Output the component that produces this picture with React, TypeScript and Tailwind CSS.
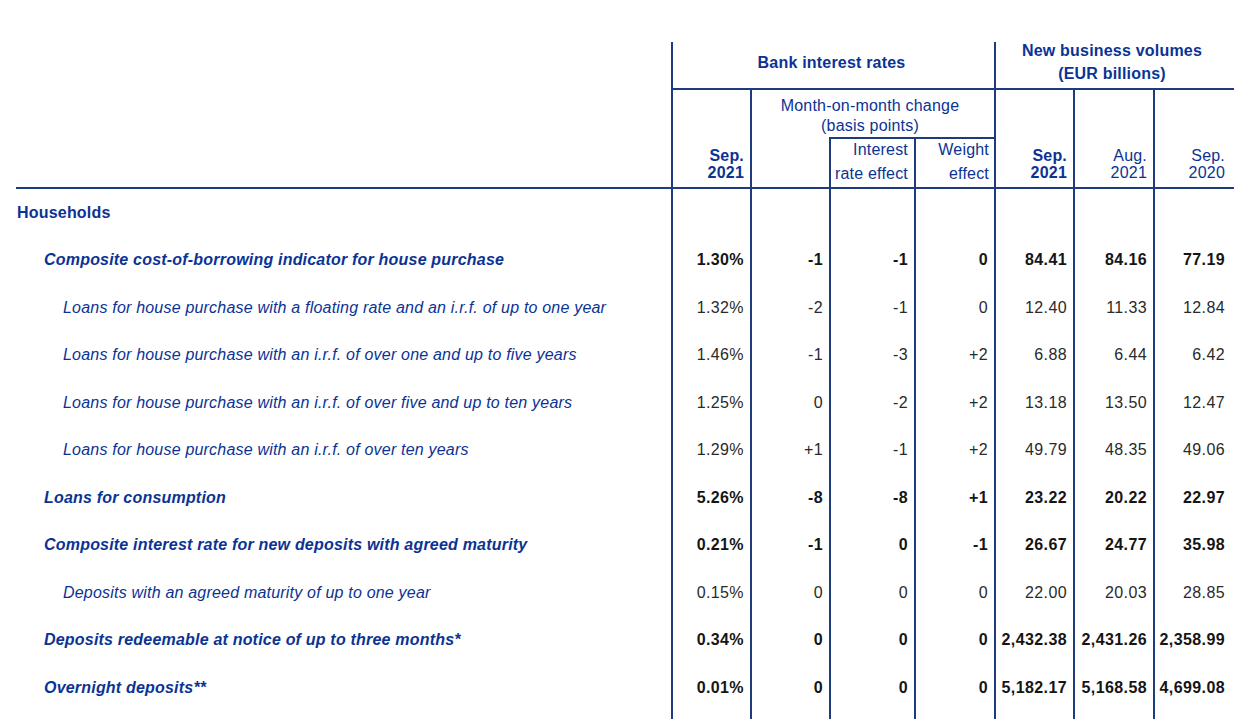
const COLS = 'grid-cols-[655px_79px_79px_85px_80px_79px_80px_81px]';

type Row = {
  label: string;
  level: 0 | 1 | 2;
  values?: string[];
};

const rows: Row[] = [
  { label: 'Households', level: 0 },
  {
    label: 'Composite cost-of-borrowing indicator for house purchase',
    level: 1,
    values: ['1.30%', '-1', '-1', '0', '84.41', '84.16', '77.19'],
  },
  {
    label: 'Loans for house purchase with a floating rate and an i.r.f. of up to one year',
    level: 2,
    values: ['1.32%', '-2', '-1', '0', '12.40', '11.33', '12.84'],
  },
  {
    label: 'Loans for house purchase with an i.r.f. of over one and up to five years',
    level: 2,
    values: ['1.46%', '-1', '-3', '+2', '6.88', '6.44', '6.42'],
  },
  {
    label: 'Loans for house purchase with an i.r.f. of over five and up to ten years',
    level: 2,
    values: ['1.25%', '0', '-2', '+2', '13.18', '13.50', '12.47'],
  },
  {
    label: 'Loans for house purchase with an i.r.f. of over ten years',
    level: 2,
    values: ['1.29%', '+1', '-1', '+2', '49.79', '48.35', '49.06'],
  },
  {
    label: 'Loans for consumption',
    level: 1,
    values: ['5.26%', '-8', '-8', '+1', '23.22', '20.22', '22.97'],
  },
  {
    label: 'Composite interest rate for new deposits with agreed maturity',
    level: 1,
    values: ['0.21%', '-1', '0', '-1', '26.67', '24.77', '35.98'],
  },
  {
    label: 'Deposits with an agreed maturity of up to one year',
    level: 2,
    values: ['0.15%', '0', '0', '0', '22.00', '20.03', '28.85'],
  },
  {
    label: 'Deposits redeemable at notice of up to three months*',
    level: 1,
    values: ['0.34%', '0', '0', '0', '2,432.38', '2,431.26', '2,358.99'],
  },
  {
    label: 'Overnight deposits**',
    level: 1,
    values: ['0.01%', '0', '0', '0', '5,182.17', '5,168.58', '4,699.08'],
  },
];

function BodyRow({ row }: { row: Row }) {
  const bold = row.level < 2;
  const labelClass =
    row.level === 0
      ? 'pl-[1px] font-bold'
      : row.level === 1
        ? 'pl-[28px] font-bold italic'
        : 'pl-[47px] italic';
  const cells = row.values ?? ['', '', '', '', '', '', ''];

  return (
    <div className={`grid ${COLS} h-[47.5px]`}>
      <div className={`flex items-center text-[#0b3394] ${labelClass}`}>{row.label}</div>
      {cells.map((v, i) => (
        <div
          key={i}
          className={`flex items-center justify-end border-l-2 border-[#1e3c7c] tracking-[0.4px] ${
            i === 6 ? 'pr-[9px]' : 'pr-[6px]'
          } ${bold ? 'font-bold text-[#151515]' : 'text-[#2a2a2a]'}`}
        >
          {v}
        </div>
      ))}
    </div>
  );
}

function Header() {
  return (
    <div className={`grid ${COLS} grid-rows-[48px_47px_50px] border-b-2 border-[#1e3c7c] text-[#0b3394]`}>
      <div className="col-start-1 row-span-3 row-start-1" />

      <div className="col-span-4 col-start-2 row-start-1 flex items-center justify-center border-b-2 border-l-2 border-[#1e3c7c] pb-[4px] pr-[4px] font-bold">
        Bank interest rates
      </div>
      <div className="col-span-3 col-start-6 row-start-1 flex flex-col items-center justify-center border-b-2 border-l-2 border-[#1e3c7c] pb-[6px] pr-[6px] font-bold leading-[23px]">
        <span>New business volumes</span>
        <span>(EUR billions)</span>
      </div>

      <div className="col-start-2 row-span-2 row-start-2 flex flex-col items-end justify-end border-l-2 border-[#1e3c7c] pb-[6px] pr-[6px] font-bold leading-[17px]">
        <span>Sep.</span>
        <span>2021</span>
      </div>
      <div className="col-span-3 col-start-3 row-start-2 flex flex-col items-center justify-center border-l-2 border-[#1e3c7c] pr-[6px] pt-[4px] leading-[20px]">
        <span>Month-on-month change</span>
        <span>(basis points)</span>
      </div>
      <div className="col-start-3 row-start-3 border-l-2 border-[#1e3c7c]" />
      <div className="col-start-4 row-start-3 flex flex-col items-end justify-center border-l-2 border-t-2 border-[#1e3c7c] pb-[2px] pr-[6px] leading-[24px]">
        <span>Interest</span>
        <span>rate effect</span>
      </div>
      <div className="col-start-5 row-start-3 flex flex-col items-end justify-center border-l-2 border-t-2 border-[#1e3c7c] pb-[2px] pr-[5px] leading-[24px]">
        <span>Weight</span>
        <span>effect</span>
      </div>

      <div className="col-start-6 row-span-2 row-start-2 flex flex-col items-end justify-end border-l-2 border-[#1e3c7c] pb-[6px] pr-[6px] font-bold leading-[17px]">
        <span>Sep.</span>
        <span>2021</span>
      </div>
      <div className="col-start-7 row-span-2 row-start-2 flex flex-col items-end justify-end border-l-2 border-[#1e3c7c] pb-[6px] pr-[6px] leading-[17px]">
        <span>Aug.</span>
        <span>2021</span>
      </div>
      <div className="col-start-8 row-span-2 row-start-2 flex flex-col items-end justify-end border-l-2 border-[#1e3c7c] pb-[6px] pr-[9px] leading-[17px]">
        <span>Sep.</span>
        <span>2020</span>
      </div>
    </div>
  );
}

export default function App() {
  return (
    <div className="min-h-[719px] bg-white pl-[16px] pt-[42px] font-['Liberation_Sans',Arial,sans-serif] text-[16px] tracking-[0.2px]">
      <div className="w-[1218px]">
        <Header />
        {rows.map((r) => (
          <BodyRow key={r.label} row={r} />
        ))}
        <div className={`grid ${COLS} h-[20px]`}>
          <div />
          {[0, 1, 2, 3, 4, 5, 6].map((i) => (
            <div key={i} className="border-l-2 border-[#1e3c7c]" />
          ))}
        </div>
      </div>
    </div>
  );
}
